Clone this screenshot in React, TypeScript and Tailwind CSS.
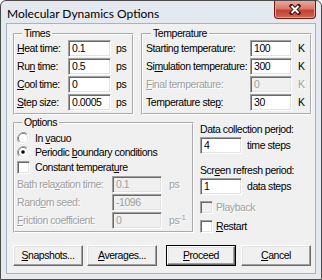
import React from "react";

const FONT = "font-['Liberation_Sans',Arial,sans-serif]";

function U({ children }: { children: React.ReactNode }) {
  return <span className="underline underline-offset-[1px]">{children}</span>;
}

function Edit({ value, className = "", disabled = false }: { value: string; className?: string; disabled?: boolean }) {
  return (
    <div
      className={`h-[17px] shrink-0 border border-t-[#a0a0a0] border-l-[#a0a0a0] border-r-white border-b-white shadow-[inset_1px_1px_0_#696969,inset_-1px_-1px_0_#e3e3e3] pl-[3px] flex items-center leading-none [text-shadow:none] ${
        disabled ? "bg-[#f0f0f0] text-[#a0a0a0]" : "bg-white text-black"
      } ${className}`}
    >
      {value}
    </div>
  );
}

function Group({ title, className = "", children }: { title: React.ReactNode; className?: string; children: React.ReactNode }) {
  return (
    <fieldset className={`border-2 border-white [border-style:groove] min-w-0 ${className}`}>
      <legend className="ml-[5px] px-[2px] h-[13px] leading-[13px]">{title}</legend>
      {children}
    </fieldset>
  );
}

function Check({ disabled = false }: { disabled?: boolean }) {
  return (
    <div
      className={`w-[13px] h-[13px] shrink-0 border border-t-[#a0a0a0] border-l-[#a0a0a0] border-r-white border-b-white shadow-[inset_1px_1px_0_#696969,inset_-1px_-1px_0_#e3e3e3] ${
        disabled ? "bg-[#f0f0f0]" : "bg-white"
      }`}
    />
  );
}

function Radio({ checked = false }: { checked?: boolean }) {
  return (
    <svg width="12" height="12" viewBox="0 0 12 12" className="shrink-0">
      <path d="M10.2 1.8 A6 6 0 0 0 1.8 10.2" fill="none" stroke="#a0a0a0" strokeWidth="1" />
      <path d="M1.8 10.2 A6 6 0 0 0 10.2 1.8" fill="none" stroke="#ffffff" strokeWidth="1" />
      <path d="M9.5 2.5 A5 5 0 0 0 2.5 9.5" fill="none" stroke="#696969" strokeWidth="1" />
      <path d="M2.5 9.5 A5 5 0 0 0 9.5 2.5" fill="none" stroke="#e3e3e3" strokeWidth="1" />
      <circle cx="6" cy="6" r="4" fill="#ffffff" />
      {checked && <circle cx="6" cy="6" r="1.8" fill="#000000" />}
    </svg>
  );
}

function Btn({ children, def = false }: { children: React.ReactNode; def?: boolean }) {
  const inner = (
    <div className="w-full h-full bg-[#f0f0f0] border border-t-white border-l-white border-r-[#696969] border-b-[#696969] shadow-[inset_-1px_-1px_0_#a0a0a0,inset_1px_1px_0_#e3e3e3] flex items-center justify-center">
      {children}
    </div>
  );
  return def ? (
    <div className="w-[70px] h-[21px] border border-black">{inner}</div>
  ) : (
    <div className="w-[70px] h-[21px]">{inner}</div>
  );
}

function TRow({ label, value, unit }: { label: React.ReactNode; value: string; unit: string }) {
  return (
    <div className="flex items-center h-[17px]">
      <div className="w-[51px] whitespace-nowrap">{label}</div>
      <Edit value={value} className="w-[43px]" />
      <div className="ml-[5px]">{unit}</div>
    </div>
  );
}

function KRow({ label, value, disabled = false }: { label: React.ReactNode; value: string; disabled?: boolean }) {
  return (
    <div className={`flex items-center h-[17px] ${disabled ? "text-[#a0a0a0] [text-shadow:1px_1px_0_#fff]" : ""}`}>
      <div className="w-[104px] whitespace-nowrap">{label}</div>
      <Edit value={value} className="w-[42px]" disabled={disabled} />
      <div className="ml-[6px]">K</div>
    </div>
  );
}

function ORow({ label, value, unit }: { label: React.ReactNode; value: string; unit: React.ReactNode }) {
  return (
    <div className="flex items-center h-[17px] text-[#a0a0a0] [text-shadow:1px_1px_0_#fff]">
      <div className="w-[95px] whitespace-nowrap">{label}</div>
      <Edit value={value} className="w-[50px]" disabled />
      <div className="ml-[7px] whitespace-nowrap">{unit}</div>
    </div>
  );
}

export default function App() {
  return (
    <div className={`w-[322px] h-[280px] bg-white ${FONT}`}>
      <div className="w-[322px] h-[280px] flex flex-col bg-[#e4e9ef] border border-[#4a4a4a] rounded-t-[6px] overflow-hidden">
        {/* title bar */}
        <div className="h-[22px] flex items-start justify-between shrink-0">
          <div className="pl-[6px] pt-[5px] text-[12px] leading-[15px] text-black font-['Lato',sans-serif]">
            Molecular Dynamics Options
          </div>
          <div className="mr-[5px] w-[42px] h-[18px] rounded-b-[4px] border border-t-0 border-[#6b1a12] bg-[linear-gradient(#eaa99c,#d8786a_45%,#c2432f_55%,#cf6650)] flex items-center justify-center shadow-[inset_0_-1px_0_#e9a08f,inset_1px_0_0_#e9a08f,inset_-1px_0_0_#e9a08f]">
            <svg width="12" height="11" viewBox="0 0 12 11">
              <path d="M2.5 2 L9.5 9 M9.5 2 L2.5 9" stroke="#4a120a" strokeWidth="4" strokeLinecap="square" />
              <path d="M2.5 2 L9.5 9 M9.5 2 L2.5 9" stroke="#ffffff" strokeWidth="2" />
            </svg>
          </div>
        </div>
        {/* client */}
        <div className="mx-[5px] mb-[5px] flex-1 border border-[#a9b3bd] bg-[#f0f0f0] text-[10.5px] tracking-[-0.45px] leading-[13px] text-black flex flex-col pl-[6px] pt-[3px]">
          <div className="flex gap-[7px]">
            <Group title="Times" className="w-[121px] pl-[2px] pb-[2px]">
              <div className="flex flex-col gap-[1px]">
                <TRow label={<><U>H</U>eat time:</>} value="0.1" unit="ps" />
                <TRow label={<>Ru<U>n</U> time:</>} value="0.5" unit="ps" />
                <TRow label={<><U>C</U>ool time:</>} value="0" unit="ps" />
                <TRow label={<><U>S</U>tep size:</>} value="0.0005" unit="ps" />
              </div>
            </Group>
            <Group title="Temperature" className="w-[171px] pl-[3px] pb-[2px]">
              <div className="flex flex-col gap-[1px]">
                <KRow label={<>Starting temperature:</>} value="100" />
                <KRow label={<>Si<U>m</U>ulation temperature:</>} value="300" />
                <KRow label={<><U>F</U>inal temperature:</>} value="0" disabled />
                <KRow label={<>Temperature ste<U>p</U>:</>} value="30" />
              </div>
            </Group>
          </div>
          <div className="flex gap-[6px] mt-[1px]">
            <Group title="Options" className="w-[181px] pl-[2px] pb-[1px]">
              <div className="flex flex-col pt-[2px]">
                <div className="flex items-center h-[14px] gap-[6px]">
                  <Radio />
                  <span>In <U>v</U>acuo</span>
                </div>
                <div className="flex items-center h-[14px] gap-[6px]">
                  <Radio checked />
                  <span className="whitespace-nowrap">Periodic <U>b</U>oundary conditions</span>
                </div>
                <div className="flex items-center h-[16px] gap-[5px]">
                  <Check />
                  <span className="whitespace-nowrap">Constant temperat<U>u</U>re</span>
                </div>
                <div className="flex flex-col gap-[1px] mt-[1px]">
                  <ORow label={<>Bath rela<U>x</U>ation time:</>} value="0.1" unit="ps" />
                  <ORow label={<>Rand<U>o</U>m seed:</>} value="-1096" unit="" />
                  <ORow label={<><U>F</U>riction coefficient:</>} value="0" unit={<>ps<sup className="text-[8px]">-1</sup></>} />
                </div>
              </div>
            </Group>
            <div className="flex flex-col pt-[7px] whitespace-nowrap">
              <div className="h-[13px]">Data collection per<U>i</U>od:</div>
              <div className="flex items-center mt-[1px]">
                <Edit value="4" className="w-[42px]" />
                <span className="ml-[5px]">time steps</span>
              </div>
              <div className="h-[13px] mt-[10px]">Scr<U>e</U>en refresh period:</div>
              <div className="flex items-center mt-[1px]">
                <Edit value="1" className="w-[42px]" />
                <span className="ml-[5px]">data steps</span>
              </div>
              <div className="flex items-center h-[13px] mt-[6px] gap-[3px] text-[#a0a0a0] [text-shadow:1px_1px_0_#fff]">
                <Check disabled />
                <span>Playback</span>
              </div>
              <div className="flex items-center h-[13px] mt-[6px] gap-[3px]">
                <Check />
                <span><U>R</U>estart</span>
              </div>
            </div>
          </div>
          <div className="flex mt-[12px]">
            <Btn><span><U>S</U>napshots...</span></Btn>
            <div className="ml-[4px]"><Btn><span><U>A</U>verages...</span></Btn></div>
            <div className="ml-[9px]"><Btn def><span><U>P</U>roceed</span></Btn></div>
            <div className="ml-[5px]"><Btn><span><U>C</U>ancel</span></Btn></div>
          </div>
        </div>
      </div>
    </div>
  );
}
